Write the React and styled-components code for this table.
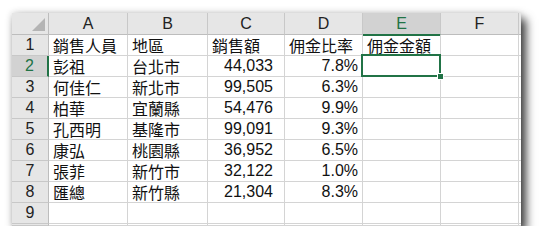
import React from 'react';
import styled, { createGlobalStyle, css } from 'styled-components';

const GlobalStyle = createGlobalStyle`
  body {
    margin: 0;
    background: #ffffff;
    font-family: "Liberation Sans", "Noto Sans CJK TC", sans-serif;
  }
`;

const Page = styled.div`
  padding: 13px 0 0 12px;
`;

const Sheet = styled.div`
  width: 509px;
  height: 213px;
  overflow: hidden;
  background: #ffffff;
  box-shadow: 5px 6px 9px rgba(0, 0, 0, 0.75), 0 0 7px rgba(0, 0, 0, 0.18);

  display: grid;
  grid-template-columns: 37px 79px 80px 77px 78px 78px 78px 1fr;
  grid-template-rows: 22px repeat(9, 21px) 1fr;
`;

const green = '#217346';

const Corner = styled.div`
  position: relative;
  background: #e6e6e6;
  border-right: 1px solid #bdbdbd;
  border-bottom: 1px solid #bdbdbd;

  &::after {
    content: '';
    position: absolute;
    right: 3px;
    bottom: 3px;
    width: 0;
    height: 0;
    border-left: 13px solid transparent;
    border-bottom: 13px solid #b4b4b4;
  }
`;

const ColHead = styled.div`
  display: flex;
  align-items: center;
  justify-content: center;
  font-size: 16px;
  color: #222222;
  background: #e6e6e6;
  border-right: 1px solid #c8c8c8;
  border-bottom: 1px solid #bdbdbd;

  ${(p) =>
    p.$active &&
    css`
      background: #d2d2d2;
      color: ${green};
      border-bottom: 2px solid ${green};
      margin-bottom: -1px;
    `}
`;

const RowHead = styled.div`
  display: flex;
  align-items: center;
  justify-content: center;
  font-size: 16px;
  color: #222222;
  background: #e6e6e6;
  border-right: 1px solid #bdbdbd;
  border-bottom: 1px solid #c8c8c8;

  ${(p) =>
    p.$active &&
    css`
      background: #d2d2d2;
      color: ${green};
      border-right: 2px solid ${green};
    `}
`;

const Cell = styled.div`
  position: relative;
  display: flex;
  align-items: center;
  justify-content: ${(p) => (p.$num ? 'flex-end' : 'flex-start')};
  padding: 0 ${(p) => p.$pr || 4}px 1px 4px;
  font-size: 16px;
  color: #111111;
  white-space: nowrap;
  border-right: 1px solid #d4d4d4;
  border-bottom: 1px solid #d4d4d4;

  ${(p) =>
    p.$selected &&
    css`
      &::after {
        content: '';
        position: absolute;
        left: -2px;
        top: -2px;
        right: -1px;
        bottom: -1px;
        border: 2px solid ${green};
      }
      &::before {
        content: '';
        position: absolute;
        right: -4px;
        bottom: -4px;
        width: 5px;
        height: 5px;
        background: ${green};
        border: 1px solid #ffffff;
        z-index: 1;
      }
    `}
`;

const columns = ['A', 'B', 'C', 'D', 'E', 'F', ''];

const rows = [
  ['銷售人員', '地區', '銷售額', '佣金比率', '佣金金額'],
  ['彭祖', '台北市', '44,033', '7.8%'],
  ['何佳仁', '新北市', '99,505', '6.3%'],
  ['柏華', '宜蘭縣', '54,476', '9.9%'],
  ['孔西明', '基隆市', '99,091', '9.3%'],
  ['康弘', '桃園縣', '36,952', '6.5%'],
  ['張菲', '新竹市', '32,122', '1.0%'],
  ['匯總', '新竹縣', '21,304', '8.3%'],
  [],
  [],
];

export default function App() {
  return (
    <Page>
      <GlobalStyle />
      <Sheet>
        <Corner />
        {columns.map((c, i) => (
          <ColHead key={i} $active={c === 'E'}>
            {c}
          </ColHead>
        ))}
        {rows.map((row, r) => (
          <React.Fragment key={r}>
            {/* the last row only peeks out under row 9, so it has no label */}
            <RowHead $active={r === 1}>{r < 9 ? r + 1 : ''}</RowHead>
            {columns.map((_, c) => {
              const isNum = r > 0 && (c === 2 || c === 3);
              return (
                <Cell
                  key={c}
                  $num={isNum}
                  $pr={c === 2 && r > 0 ? 11 : 4}
                  $selected={r === 1 && c === 4}
                >
                  {row[c] || ''}
                </Cell>
              );
            })}
          </React.Fragment>
        ))}
      </Sheet>
    </Page>
  );
}
